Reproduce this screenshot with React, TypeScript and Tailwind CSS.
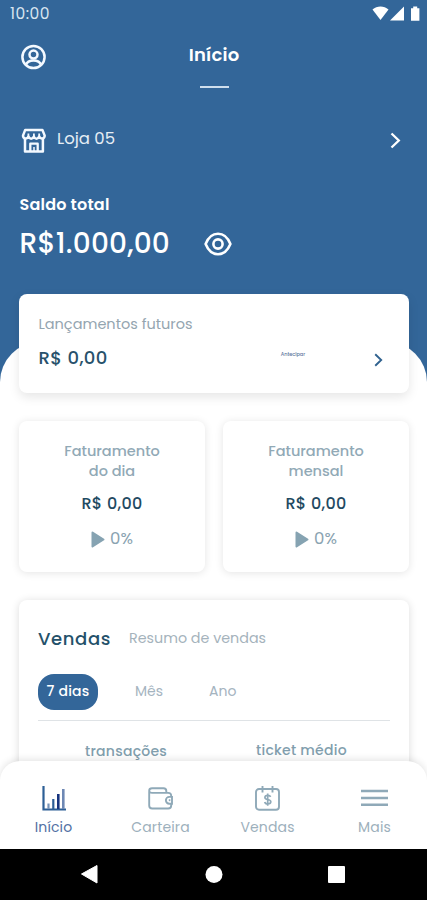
import React from "react";

function StatusIcons() {
  return (
    <svg width="50" height="16" viewBox="0 0 50 16" fill="#fff">
      <path d="M0.500 3.600C5 -0.600 12 -0.600 16.500 3.600L8.500 14Z" />
      <path d="M18 14.500 32 0.500V14.500Z" />
      <path d="M39 2.200h2.200V0.500h4v1.700h2.200V14.800H39Z" />
    </svg>
  );
}

function UserIcon() {
  return (
    <svg width="26" height="26" viewBox="0 0 26 26" fill="none" stroke="#f4f9ff" strokeWidth="2.500">
      <circle cx="13.500" cy="13" r="11.100" />
      <circle cx="13.500" cy="10.600" r="4" />
      <path d="M6 20.800C7 17.600 9.700 16.400 13.500 16.400s6.500 1.200 7.500 4.400" />
    </svg>
  );
}

function StoreIcon() {
  return (
    <svg width="26" height="26" viewBox="0 0 26 26" fill="none" stroke="#f4f9ff" strokeWidth="2.500" strokeLinejoin="round">
      <path d="M4.200 1.900H21.400L23.700 7.600C23.700 11 19.600 11.600 18.200 8.600 17 11.400 14 11.400 12.900 8.600 11.600 11.400 8.600 11.400 7.400 8.600 6 11.600 2 11 2 7.600Z" />
      <path d="M4 10.500V23.600H21.900V10.500" />
      <path d="M9.300 23.500V15.700H16.700V23.500" strokeWidth="2.300" />
      <path d="M13 19v4" strokeWidth="1.500" />
      <path d="M7.400 5.500V9M18.200 5.500V9M12.900 5.500V9" strokeWidth="1.800" />
    </svg>
  );
}

function EyeIcon() {
  return (
    <svg width="28" height="24" viewBox="0 0 28 24" fill="none" stroke="#fff" strokeWidth="2.600">
      <path d="M1.600 12C4.200 5.600 8.400 1.800 14 1.800S23.800 5.600 26.400 12C23.800 18.400 19.600 22.200 14 22.200S4.200 18.400 1.600 12Z" strokeLinejoin="round" />
      <circle cx="14" cy="12" r="4.600" />
    </svg>
  );
}

function Chevron({ color, width, height }: { color: string; width: number; height: number }) {
  return (
    <svg width={width} height={height} viewBox="0 0 11 17" fill="none" stroke={color} strokeWidth="2.300">
      <path d="M1.500 1.500 8.800 8.500 1.500 15.500" />
    </svg>
  );
}

function ChartIcon() {
  return (
    <svg width="24" height="25" viewBox="0 0 24 25" fill="none">
      <path d="M1.500 0V23.500H24" stroke="#2d5f96" strokeWidth="2.200" />
      <path d="M6.500 17.500V23" stroke="#7793b8" strokeWidth="2.200" />
      <path d="M11.300 13V23" stroke="#2d5f96" strokeWidth="2.200" />
      <path d="M16.300 8V23" stroke="#17347e" strokeWidth="2.600" />
      <path d="M21.300 3V23" stroke="#6e88b4" strokeWidth="2.600" />
    </svg>
  );
}

function WalletIcon() {
  return (
    <svg width="25" height="23" viewBox="0 0 25 23" fill="none" stroke="#8fa9b8" strokeWidth="1.900">
      <path d="M1.200 4.200V18.500Q1.200 21.500 4.200 21.500H20.200Q23.200 21.500 23.200 18.500V17M23.200 9.300V8.900Q23.200 5.900 20.200 5.900H4Q1.200 5.900 1.200 3.700 1.200 1.200 4 1.200H15.500Q18.300 1.200 18.300 4V5.900" />
      <path d="M24 9.900H21.300A3.400 3.400 0 0 0 21.300 16.700H24Z" />
      <path d="M20.800 13.200h1.600" />
    </svg>
  );
}

function CalendarIcon() {
  return (
    <svg width="25" height="25" viewBox="0 0 25 25" fill="none" stroke="#8fa9b8" strokeWidth="1.900">
      <rect x="1" y="3" width="23" height="20.800" rx="3" />
      <path d="M7.500 0V6.500M17.500 0V6.500" />
      <path d="M15.600 10.900C15.200 9.800 14.200 9.300 12.800 9.300 11 9.300 9.900 10.100 9.900 11.400 9.900 14.300 15.800 12.600 15.800 15.700 15.800 17.100 14.500 17.900 12.800 17.900 11 17.900 10 17.200 9.700 16M12.700 7.500V19.700" strokeWidth="1.700" />
    </svg>
  );
}

function MenuIcon() {
  return (
    <svg width="27" height="18" viewBox="0 0 27 18" fill="none" stroke="#8fa9b8" strokeWidth="2.400">
      <path d="M0 2H27M0 9H27M0 15.700H27" />
    </svg>
  );
}

function RevenueCard({ first, second }: { first: string; second: string }) {
  return (
    <article className="flex h-[151px] w-[186px] flex-col items-center rounded-lg bg-white pt-5 shadow-[0_1px_9px_rgba(0,0,0,0.11)]">
      <div className="text-center text-[14.500px] font-medium leading-5 text-[#91a9b6]">
        <div>{first}</div>
        <div>{second}</div>
      </div>
      <div className="mt-[13px] text-[16px] font-medium leading-5 tracking-[0.3px] text-[#1f4a62]">R$ 0,00</div>
      <div className="mt-[15px] flex h-5 items-center gap-[5px] text-[16.500px] leading-5 text-[#8aa3b1]">
        <svg width="14" height="17" viewBox="0 0 14 17" fill="#86a3b2" stroke="#86a3b2" strokeWidth="2" strokeLinejoin="round">
          <path d="M1.500 1.500 12.500 8.500 1.500 15.500Z" />
        </svg>
        <span>0%</span>
      </div>
    </article>
  );
}

function NavItem({ label, active, children }: { label: string; active?: boolean; children: React.ReactNode }) {
  return (
    <div className="flex w-[107px] shrink-0 flex-col items-center">
      <div className="flex h-[26px] items-center">{children}</div>
      <span className={"mt-[6px] text-[14px] leading-5 tracking-[0.15px] " + (active ? "text-[#5270a3]" : "text-[#9db0bc]")}>{label}</span>
    </div>
  );
}

export default function App() {
  return (
    <div className="flex h-[900px] w-[427px] flex-col overflow-hidden whitespace-nowrap bg-white font-['Poppins','Inter',sans-serif]">
      <div className="h-[781px] shrink-0 overflow-hidden">
        <header className="h-[342px] bg-[#336699] text-white">
          <div className="flex h-7 items-center justify-between pl-[10px] pr-[5px]">
            <span className="text-[15.500px] tracking-[0.5px] text-[#d8e5f0]">10:00</span>
            <StatusIcons />
          </div>
          <div className="grid h-[61px] grid-cols-[54px_1fr_54px]">
            <div className="pl-5 pt-4"><UserIcon /></div>
            <div className="flex flex-col items-center pt-[15px] pl-px">
              <span className="text-[18px] font-semibold leading-6 tracking-[0.2px]">Início</span>
              <span className="mt-[19px] h-[2px] w-[29px] bg-[#cfdeed]" />
            </div>
          </div>
          <div className="mt-[38px] flex h-[27px] items-center pl-[21px] pr-[26px]">
            <StoreIcon />
            <span className="mb-1 ml-[10px] text-[16.500px] leading-5 text-[#e6eef5]">Loja 05</span>
            <span className="ml-auto"><Chevron color="#fff" width={11} height={17} /></span>
          </div>
          <div className="mt-[41px] pl-[19.500px] text-[16px] font-semibold leading-5 tracking-[0.2px]">Saldo total</div>
          <div className="mt-[11px] flex h-[36px] items-center pl-[19.500px]">
            <span className="w-[184px] text-[28px] font-medium leading-9 tracking-[0.2px]">R$1.000,00</span>
            <EyeIcon />
          </div>
        </header>
        <div className="bg-[#336699]">
          <main className="rounded-t-[40px] bg-white pl-[19px] pr-[18px]">
            <section className="relative -top-12 -mb-12 flex h-[99px] flex-col rounded-lg bg-white pl-[19.500px] pr-[26px] pt-5 shadow-[0_4px_11px_rgba(0,0,0,0.1)]">
              <div className="text-[14.500px] leading-5 text-[#94a5b0]">Lançamentos futuros</div>
              <div className="mt-[14px] flex h-5 items-center">
                <span className="text-[18px] font-medium leading-5 tracking-[0.4px] text-[#28516b]">R$ 0,00</span>
                <span className="mb-[6px] ml-auto mr-[69px] text-[5px] font-medium leading-[6px] tracking-[-0.05px] text-[#60779e]">Antecipar</span>
                <span className="mt-[4px]"><Chevron color="#30628f" width={9} height={14} /></span>
              </div>
            </section>
            <section className="mt-7 flex justify-between">
              <RevenueCard first="Faturamento" second="do dia" />
              <RevenueCard first="Faturamento" second="mensal" />
            </section>
            <section className="mt-7 h-[200px] rounded-lg bg-white px-[19px] pt-[26px] shadow-[0_1px_9px_rgba(0,0,0,0.14)]">
              <div className="flex h-6 items-center">
                <h2 className="w-[91px] text-[18px] font-medium tracking-[0.6px] text-[#24516a]">Vendas</h2>
                <span className="mt-px text-[14.300px] text-[#a5b3bc]">Resumo de vendas</span>
              </div>
              <div className="mt-6 flex h-9 items-center text-[14px] leading-5 text-[#a5b4bf]">
                <span className="flex h-9 w-[60px] items-center justify-center rounded-2xl bg-[#336699] pb-[2px] font-medium tracking-[0.2px] text-white">7 dias</span>
                <span className="mb-[2px] ml-[37px] w-[74px]">Mês</span>
                <span className="mb-[2px]">Ano</span>
              </div>
              <div className="mt-[10px] h-px bg-[#dfe3e6]" />
              <div className="mt-[19px] flex text-[14px] font-medium leading-5 tracking-[0.25px] text-[#819ead]">
                <span className="ml-[47px] w-[171px] pt-px">transações</span>
                <span>ticket médio</span>
              </div>
            </section>
          </main>
        </div>
      </div>
      <nav className="relative -mt-5 flex h-[88px] shrink-0 rounded-t-[20px] bg-white pt-6 shadow-[0_-2px_7px_rgba(0,0,0,0.1)]">
        <NavItem label="Início" active><ChartIcon /></NavItem>
        <NavItem label="Carteira"><WalletIcon /></NavItem>
        <NavItem label="Vendas"><CalendarIcon /></NavItem>
        <NavItem label="Mais"><MenuIcon /></NavItem>
      </nav>
      <footer className="relative flex h-[51px] shrink-0 items-center bg-black">
        <svg width="427" height="51" viewBox="0 0 427 51" fill="#fff">
          <path d="M81.500 25 97 16.500V34Z" stroke="#fff" strokeLinejoin="round" />
          <circle cx="214" cy="25.500" r="8.500" />
          <rect x="328" y="17" width="17" height="17" rx="1" />
        </svg>
      </footer>
    </div>
  );
}
